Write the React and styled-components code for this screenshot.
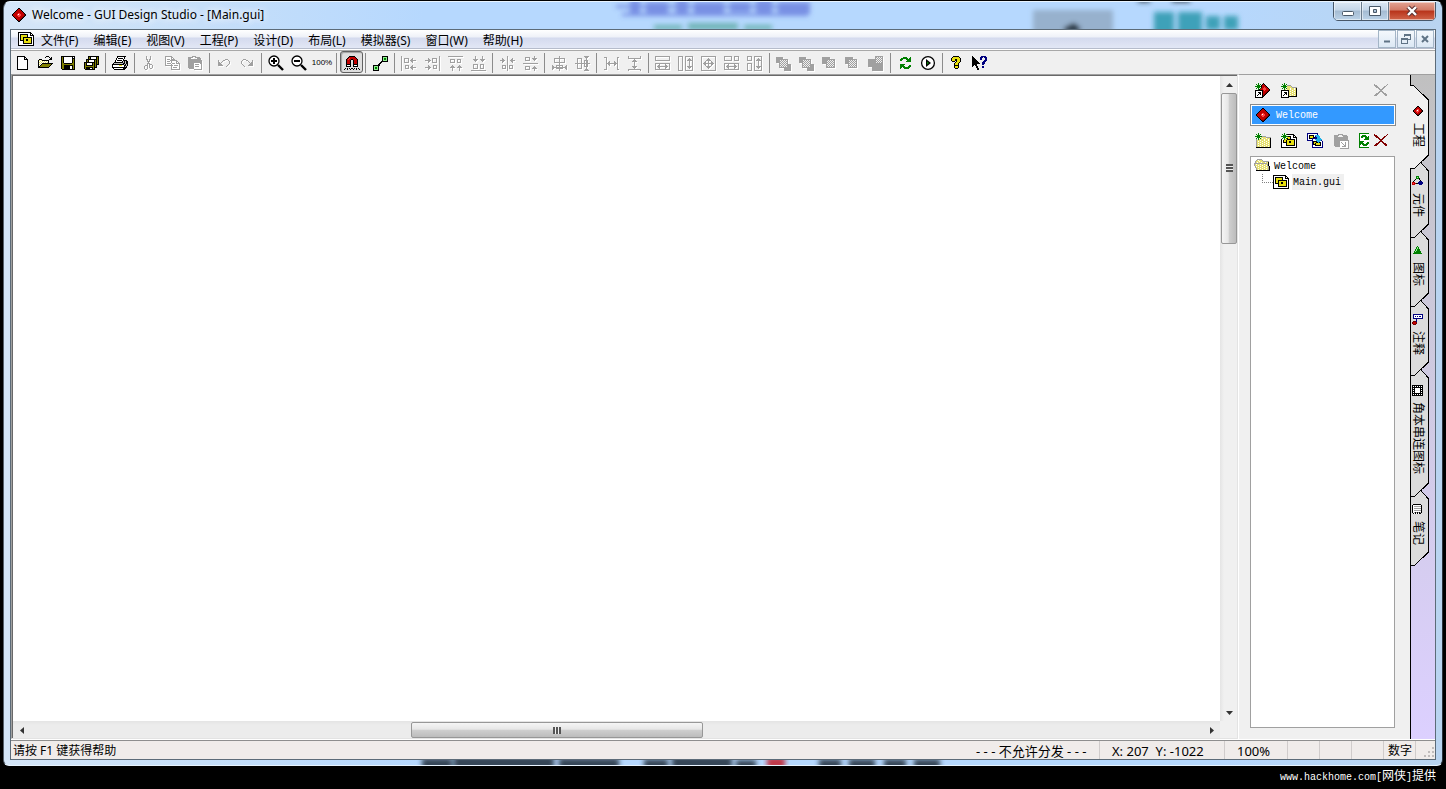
import React, { useState } from 'react'
import styled, { createGlobalStyle, css } from 'styled-components'

/*

  1. Bitmap draws the old 16 colour toolbar icons, one letter for each pixel.
  2. Line draws the thin one pixel icons (align, size, order).
  3. Menu, toolbar, side tabs and status bar are mapped from the arrays below.

 */

const palette = {
  K: '#000000',
  W: '#ffffff',
  O: '#808000',
  Y: '#e6e070',
  y: '#e8e010',
  G: '#c0c0c0',
  g: '#a0a0a0',
  R: '#c00000',
  r: '#ff4040',
  D: '#700000',
  N: '#008000',
  n: '#90ee90',
  B: '#000080',
  b: '#20b0e8'
}

const bitmaps = {
  open: [
    '',
    '.........KKK....',
    '........K...K.K.',
    '.............KK.',
    '..KKK.......KKK.',
    '.KYWYKKKKKKK....',
    '.KWYWYWYWYWK....',
    '.KYWYWYWYWYK....',
    '.KWYWKKKKKKKKKKK',
    '.KYWKOOOOOOOOOK.',
    '.KWKOOOOOOOOOK..',
    '.KKOOOOOOOOOK...',
    '.KKKKKKKKKKK....'
  ],
  save: [
    '',
    '.KKKKKKKKKKKKKK',
    '.KOKWWWWWWWWKWK',
    '.KOKWWWWWWWWKKK',
    '.KOKWWWWWWWWKOK',
    '.KOKWWWWWWWWKOK',
    '.KOKWWWWWWWWKOK',
    '.KOKWWWWWWWWKOK',
    '.KOOKKKKKKKKOOK',
    '.KOOOOOOOOOOOOK',
    '.KOOKKKKKKKKKOK',
    '.KOOKKKKKKWWKOK',
    '.KOOKKKKKKWWKOK',
    '.KOOKKKKKKWWKOK',
    '..KKKKKKKKKKKKK'
  ],
  saveAll: [
    '',
    '.....KKKKKKKKKKK',
    '.....KOKWWWWWKOK',
    '.....KOKWWWWWKOK',
    '...KKKKKKKKKKKOK',
    '...KOKWWWWWKOKOK',
    '...KOKWWWWWKOKOK',
    '.KKKKKKKKKKKOKOK',
    '.KOKWWWWWKOKOKOK',
    '.KOKWWWWWKOKOKKK',
    '.KOKKKKKKKOKOK..',
    '.KOOOOOOOOOKOK..',
    '.KOKKKKKKKOKKK..',
    '.KOKKKKWWKOK....',
    '..KKKKKKKKKK....'
  ],
  print: [
    '',
    '.....KKKKKKKKK..',
    '.....KWWWWWWK...',
    '....KWKKKKKWK...',
    '....KWWWWWWK....',
    '...KWKKKKKWKKKK.',
    '...KWWWWWWKGKGKK',
    '..KKKKKKKKKGKGKK',
    '.KGGGGGGGGGKKGKK',
    'KKKKKKKKKKKKGKGK',
    'KWWWWWWyyyWWKKGK',
    'KWWWWWWWWWWWKGK.',
    'KKKKKKKKKKKKKKK.',
    '.KWWWWWWWWWKKK..',
    '..KKKKKKKKKKK...'
  ],
  cut: [
    '',
    '.....g...g',
    '.....g...g',
    '.....g...g',
    '.....gg.gg',
    '......g.g',
    '......ggg',
    '.......g',
    '......ggg',
    '......g.ggg',
    '....ggg.g..g',
    '...g..g.g..g',
    '...g..g.g..g',
    '...g..g..gg',
    '....gg'
  ],
  copy: [
    '',
    '.ggggggg',
    '.gWWWWWgg',
    '.gWWWWWgWg',
    '.gWgggWgggg',
    '.gWWWWggggggg',
    '.gWgggWgWWWWgg',
    '.gWWWWWgWWWWgWg',
    '.gWggggWgggWgggg',
    '.gWWWWWgWWWWWWWg',
    '.ggggggggWggggWg',
    '.......gWWWWWWWg',
    '.......gWggggWWg',
    '.......gWWWWWWWg',
    '.......ggggggggg'
  ],
  paste: [
    '',
    '.....gggg',
    '.ggggg..ggggg',
    '.ggg......gggg',
    '.ggggggggggggg',
    '.gggggggggggggg',
    '.gggggggggggggg',
    '.gggggggggggggg',
    '.ggggggWWWWWWgg',
    '.ggggggWggggWWg',
    '.ggggggWWWWWWWg',
    '.ggggggWggggWWg',
    '.ggggggWWWWWWWg',
    '..gggggWWWWWWWg',
    '.......gggggggg'
  ],
  undo: [
    '',
    '',
    '',
    '',
    '.........ggg',
    '..g....gg...g',
    '..g...g......g',
    '..gg.g.......g',
    '..ggg........g',
    '..gggg......g',
    '..ggggg....g',
    '..........g'
  ],
  redo: [
    '',
    '',
    '',
    '',
    '....ggg',
    '...g...gg....g',
    '..g......g...g',
    '..g.......g.gg',
    '..g........ggg',
    '...g......gggg',
    '....g....ggggg',
    '.....g'
  ],
  magnet: [
    '',
    '.....KKKKKK',
    '....KRRRRRRK',
    '...KRrRRRRRRK',
    '..KRrRRKKRRRRK',
    '..KRRRK..KRRRK',
    '..KRRRK..KRRRK',
    '..KRRRK..KRRRK',
    '..KRRRK..KRRRK',
    '..KKKKK..KKKKK',
    '..KWWWK..KWWWK',
    '..KKKKK..KKKKK',
    '',
    '.K.K.K.KK.K.K.K',
    'K..K..K..K..K..K'
  ],
  connect: [
    '',
    '..........KKKKKK',
    '..........KnnnnK',
    '..........KnNNnK',
    '..........KnNNnK',
    '..........KnnnnK',
    '.........KKKKKKK',
    '........KK......',
    '.......KK.......',
    '......KK........',
    '.KKKKKKK........',
    '.KnnnnK.........',
    '.KnNNnK.........',
    '.KnNNnK.........',
    '.KnnnnK.........',
    '.KKKKKK.........'
  ],
  refresh: [
    '',
    '',
    '......NNNN...N',
    '....NNNNNNN.NN',
    '...NNN...NNNNN',
    '...NN.....NNNN',
    '.........NNNNN',
    '',
    '',
    '...NNNNN',
    '...NNNN.....NN',
    '...NNNNN...NNN',
    '...NN.NNNNNNN',
    '...N...NNNNN'
  ],
  help: [
    '',
    '....KKKKKK',
    '...KyyyyyyK',
    '..KyyyyyyyyK',
    '..KyyyKKyyyK',
    '..KyyyKKyyyK',
    '...KKK.KyyyK',
    '......KyyyK',
    '.....KyyyK',
    '.....KyyyK',
    '.....KKKKK',
    '.....KyyyK',
    '.....KyyyK',
    '......KKK'
  ],
  whatsThis: [
    '',
    'K........BBBBB',
    'KK......BBB.BBB',
    'KKK.....BB...BB',
    'KKKK....BB...BB',
    'KKKKK.......BBB',
    'KKKKKK.....BBB',
    'KKKKKKK...BBB',
    'KKKKKKKK..BBB',
    'KKKKK.....BB',
    'KK.KK',
    'K...KK....BB',
    '....KK....BB',
    '.....KK',
    '.....KK'
  ],
  diamond: [
    '',
    '.......KK',
    '......KRRK',
    '.....KRRRRK',
    '....KRRRRRRK',
    '...KRRRRRRRRK',
    '..KRRRRrrRRRRK',
    '.KRRRRrWrrRRRDK',
    '.KRRRRrrrrRRRDK',
    '..KRRRRrrRRRDK',
    '...KRRRRRRRDK',
    '....KRRRRRDK',
    '.....KRRRDK',
    '......KDDK',
    '.......KK'
  ],
  guiFile: [
    '',
    'KKKKKKKKKKKKK',
    'KWWWWWWWWWWWKK',
    'KWKKKKKKKKWWKWK',
    'KWKyyyyyyKWWKKKK',
    'KWKyyyyyyKWWWWWK',
    'KWKyyKKKKKKKKKWK',
    'KWKyyKyyyyyyyKWK',
    'KWKyyKyyKKyyyKWK',
    'KWKKKKyyKKyyyKWK',
    'KWWWWKyyyyyyyKWK',
    'KWWWWKyyyyyyyKWK',
    'KWWWWKKKKKKKKKWK',
    'KWWWWWWWWWWWWWWK',
    'KKKKKKKKKKKKKKKK'
  ],
  newProject: [
    '...N....K',
    '.N.N.N.KRK',
    '..NNN.KRRRK',
    'NNNNNNKRRRRK',
    '..NNN.KRRrRRK',
    '.N.N.NRRrrrRRK',
    '...NKRRRrrrRRRK',
    'KKKKKKKKRrRRRDK',
    'KWWWWWWKRRRRDK',
    'KWWKKKWKRRRDK',
    'KWWWKKWKRRDK',
    'KWWKWKWKRDK',
    'KWKWWWWKDK',
    'KWWWWWWKK',
    'KKKKKKKK'
  ],
  openProject: [
    '...N....',
    '.N.N.N...',
    '..NNN.gggg',
    'NNNNNNYYYYg',
    '..NNN.YYYYYggggg',
    '.N.N.NYYYWYYYWYK',
    '...NYWYYYWYYYWYK',
    'KKKKKKKKYYYWYYYK',
    'KWWWWWWKYWYYYWYK',
    'KWWKKKWKYYYWYYYK',
    'KWWWKKWKYWYYYWYK',
    'KWWKWKWKYYYWYYYK',
    'KWKWWWWKYWYYYWYK',
    'KWWWWWWKKKKKKKKK',
    'KKKKKKKK'
  ],
  newFolder: [
    '...N',
    '.N.N.N',
    '..NNN.',
    'NNNNNNNgggg',
    '..NNN.YYYYYggggg',
    '.N.N.NYWYYYWYYYK',
    '.g.NYYYYYWYYYWYK',
    '.gYYYWYYYWYYYWYK',
    '.gYWYYYWYYYWYYYK',
    '.gYYYWYYYWYYYWYK',
    '.gYWYYYWYYYWYYYK',
    '.gYYYWYYYWYYYWYK',
    '.gYWYYYWYYYWYYYK',
    '.gYYYWYYYWYYYWYK',
    '.KKKKKKKKKKKKKKK'
  ],
  newGui: [
    '...N',
    '.N.N.NKKKKKKK',
    '..NNN.WWWWWWKK',
    'NNNNNNNKKKWWKWK',
    '..NNN.yyyKWWKKKK',
    '.N.N.NKyyKWWWWWK',
    'KW.NyyKKKKKKKKWK',
    'KWKyyKyyyyyyyKWK',
    'KWKyyKyyKKyyyKWK',
    'KWKKKKyyKKyyyKWK',
    'KWWWWKyyyyyyyKWK',
    'KWWWWKyyyyyyyKWK',
    'KWWWWKKKKKKKKKWK',
    'KWWWWWWWWWWWWWWK',
    'KKKKKKKKKKKKKKKK'
  ],
  moveGui: [
    'BBBBBBBBBBB',
    'BWWWWWWWWWB',
    'BWKKKKKWbbbb',
    'BWKyyyKWBbbbb',
    'BWKyyyKKBBbbb',
    'BWKKKBBBBBbbbb',
    'BWWWWBWWbbbbbbb',
    'BBBBBBWWWbbbbbB',
    '.....BKKKKbbbWWB',
    '.....BKyyKKbKKWB',
    '.....BKyKyyyyKWB',
    '.....BKKKyyyyKWB',
    '.....BWWKKKKKKWB',
    '.....BWWWWWWWWWB',
    '.....BBBBBBBBBBB'
  ],
  pasteLink: [
    '',
    '.....ggggg',
    '.ggggg...ggggg',
    '.gggg.....ggggg',
    '.gggggggggggggg',
    '.gggggggggggggg',
    '.gggggggggggggg',
    '.ggggggggggggggg',
    '.ggggggWWWWWWWWg',
    '.ggggggWgWWWgWWg',
    '.ggggggWWgWWgWWg',
    '.ggggggWWWgWgWWg',
    '.ggggggWWWWggWWg',
    '..gggggWWggggWWg',
    '.......WWWWWWWWg',
    '.......ggggggggg'
  ],
  sync: [
    'NNNNNNNNNN',
    'NWWWWWWWWW',
    'NWWNNNNWWW',
    'NWNNNNNNWN',
    'NWNN.WNNNN',
    'NWWWWWNNNN',
    'NWWWWNNNNN',
    'NWWWWWWWWW',
    'NNNNNWWWWW',
    'NNNNWWWWNN',
    'NNNNNWWNNN',
    'NNWNNNNNNW',
    'NWWWNNNNWW',
    'NWWWWWWWWW',
    'NNNNNNNNNN'
  ],
  close: [
    'g............g',
    'ggg.........g',
    '.ggg......gg',
    '..ggg....gg',
    '....gg..gg',
    '.....gggg',
    '......gg',
    '.....gggg',
    '....gg..gg',
    '..ggg....ggg',
    '.ggg......ggg',
    'ggg........gg'
  ],
  folder: [
    '',
    '...ggggg',
    '..gYWYYYg',
    '.gYYYWYYYgggggg',
    '.gYWYYYWYYYWYYK',
    'gggggggggggggYK',
    'gYWYYYWYYYWYYgK',
    'gYYYWYYYWYYYWgK',
    '.gWYYYWYYYWYYYgK',
    '.gYYWYYYWYYYWYgK',
    '..gYYYWYYYWYYYgK',
    '..gYWYYYWYYYWYgK',
    '..KKKKKKKKKKKKKK'
  ],
  smallDiamond: [
    '.....KK',
    '....KRRK',
    '...KRRRRK',
    '..KRRrrRRK',
    '.KRRrWrRRDK',
    '.KRRrrrRRDK',
    '..KRRrRRDK',
    '...KRRRDK',
    '....KDDK',
    '.....KK'
  ],
  parts: [
    '....NNN',
    '....NnN',
    '....NNNK',
    '...K...K',
    '..K.....K',
    '.K.....BBB',
    'RRR...BBBBB',
    'RrRRKKBBBBB',
    'RRR....BBB'
  ],
  triangle: [
    '',
    '.....N',
    '....NnN',
    '....NnN',
    '...NnNNN',
    '...NnNNN',
    '..NnNNNNN',
    '..NNNNNNN',
    '.NNNNNNNNN'
  ],
  note: [
    '.BBBBBBBBBB',
    '.BWWWWWWWWB',
    '.BWBWBWBBWB',
    '.BWWWWWWWWB',
    '.BBBBBBBBBB',
    '....B',
    '....B',
    '.DDDB',
    'DRRRD',
    'DRRRD',
    '.DDD'
  ],
  film: [
    'KKKKKKKKKKK',
    'KWKWKWKWKWK',
    'KKKKKKKKKKK',
    'KWKWWWWWKWK',
    'KKKWWWWWKKK',
    'KWKWWWWWKWK',
    'KKKWWWWWKKK',
    'KWKWWWWWKWK',
    'KKKKKKKKKKK',
    'KWKWKWKWKWK',
    'KKKKKKKKKKK'
  ],
  notes: [
    '.KKKKKKKK',
    'KWWWWWWWWK',
    'KWgggggggK',
    'KWWWWWWWWK',
    'KWgggggggK',
    'KWWWWWWWWK',
    'KWgggggggK',
    'KWWWWWWWWK',
    'KWgKgKgKgK',
    '.KWKWKWKK'
  ]
}

const lines = {
  blank: 'M3.5 1.5h7l3 3v10h-10zM10.5 1.5v3h3',
  alignLeft: 'M.5 1v15M3.5 3.5h4v4h-4zM9 5.5h6M11.5 3.5l-2 2l2 2zM4.5 10.5h3v3h-3zM9 12.5h6M11.5 10.5l-2 2l2 2z',
  alignRight: 'M15.5 1v15M8.5 3.5h4v4h-4zM1 5.5h6M4.5 3.5l2 2l-2 2zM9.5 10.5h3v3h-3zM1 12.5h6M4.5 10.5l2 2l-2 2z',
  alignTop: 'M1 1.5h15M3.5 4.5h4v3h-4zM10.5 4.5h3v3h-3zM5.5 10v6M3.5 12.5l2-2l2 2zM12.5 10v6M10.5 12.5l2-2l2 2z',
  alignBottom: 'M1 15.5h15M3.5 9.5h4v4h-4zM10.5 9.5h3v4h-3zM5.5 1v6M3.5 4.5l2 2l2-2zM12.5 1v6M10.5 4.5l2 2l2-2z',
  centerX: 'M8.5 1v15M1 5.5h5M3.5 3.5l2 2l-2 2zM16 5.5h-5M13.5 3.5l-2 2l2 2zM3.5 10.5h3v3h-3zM10.5 10.5h3v3h-3z',
  centerY: 'M1 8.5h15M3.5 2.5h4v3h-4zM12.5 1v5M10.5 3.5l2 2l2-2zM3.5 11.5h4v3h-4zM12.5 11v5M10.5 13.5l2-2l2 2z',
  middleX: 'M8.5 1v15M3.5 3.5h10v4h-10zM5.5 10.5h6v3h-6zM1.5 10.5v4l2-2zM15.5 10.5v4l-2-2zM1 12.5h14',
  middleY: 'M1 8.5h15M3.5 3.5h4v10h-4zM10.5 5.5h3v6h-3zM10.5 1.5h4l-2 2zM10.5 15.5h4l-2-2zM12.5 1v14',
  spaceX: 'M1 2.5h2v12h-2M16 2.5h-2v12h2M4 8.5h9M6.5 6.5l-2 2l2 2zM11.5 6.5l2 2l-2 2z',
  spaceY: 'M2.5 1v2h12v-2M2.5 16v-2h12v2M8.5 4v9M6.5 6.5l2-2l2 2zM6.5 11.5l2 2l2-2z',
  sameWidth: 'M.5 1.5h14v4h-14zM.5 8.5h14v6h-14zM2 11.5h11M4.5 9.5l-2 2l2 2zM10.5 9.5l2 2l-2 2z',
  sameHeight: 'M.5 1.5h4v14h-4zM7.5 1.5h7v14h-7zM11.5 3v11M9.5 5.5l2-2l2 2zM9.5 11.5l2 2l2-2z',
  sameSize: 'M.5 1.5h14v14h-14zM2 8.5h11M7.5 3v11M4.5 6.5l-2 2l2 2zM10.5 6.5l2 2l-2 2zM5.5 5.5l2-2l2 2zM5.5 11.5l2 2l2-2z',
  fitWidth: 'M.5 1.5h7v4h-7zM10.5 1.5h4v4h-4zM.5 8.5h14v6h-14zM2 11.5h11M4.5 9.5l-2 2l2 2zM10.5 9.5l2 2l-2 2z',
  fitHeight: 'M.5 1.5h4v4h-4zM.5 8.5h4v7h-4zM7.5 1.5h7v14h-7zM11.5 3v11M9.5 5.5l2-2l2 2zM9.5 11.5l2 2l2-2z'
}

// solid squares first, dotted square on top
const orders = {
  toFront: ['M0 2h7v6H0zM8 9h7v7H8z', 'M3.5 4.500h8v8h-8z'],
  toBack: ['M0 2h7v6H0zM8 9h7v7H8z', 'M3.5 4.500h8v8h-8z'],
  forward: ['M0 2h8v7H0z', 'M4.5 4.500h8v8h-8z'],
  backward: ['M0 2h8v7H0z', 'M3.5 4.500h8v8h-8z'],
  group: ['M0 4h8v8H0zM4 7h11v9H4z', 'M7.5 1.500h7v7h-7z']
}

const runs = (row) => {
  const out = []
  let x = 0
  while (x < row.length) {
    let end = x + 1
    while (end < row.length && row[end] === row[x]) end += 1
    if (row[x] !== '.') out.push([x, end - x, palette[row[x]]])
    x = end
  }
  return out
}

const Bitmap = ({ name, size = 16, tint }) => (
  <svg width={size} height={size} viewBox={`0 0 ${size} ${size}`} shapeRendering="crispEdges" aria-hidden="true">
    {bitmaps[name].map((row, y) =>
      runs(row).map(([x, width, fill]) => (
        <rect key={`${x}-${y}`} x={x} y={y} width={width} height="1" fill={tint || fill} />
      ))
    )}
  </svg>
)

const Line = ({ name }) => (
  <svg width="16" height="16" viewBox="0 0 16 16" shapeRendering="crispEdges" aria-hidden="true">
    <path
      d={lines[name]}
      fill={name === 'blank' ? '#fff' : 'none'}
      stroke={name === 'blank' ? '#000' : '#a0a0a0'} />
  </svg>
)

const Order = ({ name }) => (
  <svg width="16" height="16" viewBox="0 0 16 16" shapeRendering="crispEdges" aria-hidden="true">
    <defs>
      <pattern id={`dots-${name}`} width="2" height="2" patternUnits="userSpaceOnUse">
        <rect width="2" height="2" fill="#f0f0f0" />
        <rect width="1" height="1" fill="#a0a0a0" />
        <rect x="1" y="1" width="1" height="1" fill="#a0a0a0" />
      </pattern>
    </defs>
    <path d={orders[name][0]} fill="#a0a0a0" />
    <path d={orders[name][1]} fill={`url(#dots-${name})`} stroke="#a0a0a0" />
  </svg>
)

const Zoom = ({ plus }) => (
  <svg width="16" height="16" viewBox="0 0 16 16" aria-hidden="true">
    <circle cx="6" cy="6" r="5" fill="#fff" stroke="#000" strokeWidth="1.3" />
    <path d={plus ? 'M3 6h6M6 3v6' : 'M3 6h6'} stroke="#000" strokeWidth="2" />
    <path d="M10 10l5 5" stroke="#000" strokeWidth="2.4" />
  </svg>
)

const Play = () => (
  <svg width="16" height="16" viewBox="0 0 16 16" aria-hidden="true">
    <circle cx="8" cy="8" r="6.4" fill="#fff" stroke="#000" strokeWidth="1.3" />
    <path d="M6 4v8l5-4z" fill="#000" />
    <path d="M7 6.5v3l2-1.5z" fill="#008000" />
  </svg>
)

const menus = ['文件(F)', '编辑(E)', '视图(V)', '工程(P)', '设计(D)', '布局(L)', '模拟器(S)', '窗口(W)', '帮助(H)']

const toolGroups = [
  [['New', <Line name="blank" />], ['Open', <Bitmap name="open" />], ['Save', <Bitmap name="save" />], ['Save all', <Bitmap name="saveAll" />]],
  [['Print', <Bitmap name="print" />]],
  [['Cut', <Bitmap name="cut" />, true], ['Copy', <Bitmap name="copy" />, true], ['Paste', <Bitmap name="paste" />, true]],
  [['Undo', <Bitmap name="undo" />, true], ['Redo', <Bitmap name="redo" />, true]],
  [['Zoom in', <Zoom plus />], ['Zoom out', <Zoom />], ['Actual size', '100%']],
  [['Snap', <Bitmap name="magnet" />]],
  [['Connect', <Bitmap name="connect" />]],
  ['alignLeft', 'alignRight', 'alignTop', 'alignBottom'].map((n) => [n, <Line name={n} />, true]),
  ['centerX', 'centerY'].map((n) => [n, <Line name={n} />, true]),
  ['middleX', 'middleY'].map((n) => [n, <Line name={n} />, true]),
  ['spaceX', 'spaceY'].map((n) => [n, <Line name={n} />, true]),
  ['sameWidth', 'sameHeight', 'sameSize', 'fitWidth', 'fitHeight'].map((n) => [n, <Line name={n} />, true]),
  Object.keys(orders).map((n) => [n, <Order name={n} />, true]),
  [['Refresh', <Bitmap name="refresh" />], ['Run', <Play />]],
  [['Help', <Bitmap name="help" />], ['What is this', <Bitmap name="whatsThis" />]]
]

const tabs = [
  { label: '工程', icon: 'smallDiamond', span: 94 },
  { label: '元件', icon: 'parts', span: 76 },
  { label: '图标', icon: 'triangle', span: 76 },
  { label: '注释', icon: 'note', span: 76 },
  { label: '角本串连图标', icon: 'film', span: 128 },
  { label: '笔记', icon: 'notes', span: 76 }
]

export default function App() {
  const [snap, setSnap] = useState(true)

  return (
    <>
      <GlobalStyle />
      <Desktop>
        <Window>
          <Backdrop />
          <TitleBar>
            <Bitmap name="diamond" />
            <Title>Welcome - GUI Design Studio - [Main.gui]</Title>
            <Caption>
              <CaptionButton aria-label="Minimize">
                <svg width="14" height="12" viewBox="0 0 14 12"><rect x="1.5" y="6.5" width="11" height="4" rx="1" fill="#fff" stroke="#4a5968" /></svg>
              </CaptionButton>
              <CaptionButton aria-label="Maximize">
                <svg width="14" height="12" viewBox="0 0 14 12">
                  <path d="M1.5 1.5h11v9h-11zM5.5 4.5h3v3h-3z" fill="#fff" fillRule="evenodd" stroke="#4a5968" />
                </svg>
              </CaptionButton>
              <CaptionButton $close aria-label="Close">
                <svg width="14" height="12" viewBox="0 0 14 12">
                  <path d="M3 2l8 8M11 2l-8 8" stroke="#5a3030" strokeWidth="4.4" />
                  <path d="M3 2l8 8M11 2l-8 8" stroke="#fff" strokeWidth="2.4" />
                </svg>
              </CaptionButton>
            </Caption>
          </TitleBar>
          <Client>
            <MenuBar>
              <Bitmap name="guiFile" />
              <MenuList>
                {menus.map((menu) => (
                  <MenuItem key={menu}>{menu}</MenuItem>
                ))}
              </MenuList>
              <ChildButton aria-label="Minimize document">
                <svg width="12" height="12" viewBox="0 0 12 12"><path d="M3 8.5h6" stroke="#5f7385" strokeWidth="2" /></svg>
              </ChildButton>
              <ChildButton aria-label="Restore document">
                <svg width="12" height="12" viewBox="0 0 12 12" shapeRendering="crispEdges">
                  <path d="M4.5 4V1.5h6v5H8M4 2.5h7M1.5 5.5h6v5h-6zM1 6.5h7" fill="none" stroke="#5f7385" />
                </svg>
              </ChildButton>
              <ChildButton aria-label="Close document">
                <svg width="12" height="12" viewBox="0 0 12 12"><path d="M3 3l6 6M9 3l-6 6" stroke="#5f7385" strokeWidth="2" /></svg>
              </ChildButton>
            </MenuBar>
            <Toolbar>
              {toolGroups.map((group, i) => (
                <ToolGroup key={i}>
                  {group.map(([name, icon, disabled]) => (
                    <ToolButton
                      key={name}
                      aria-label={name}
                      disabled={disabled}
                      $pressed={name === 'Snap' && snap}
                      onClick={name === 'Snap' ? () => setSnap(!snap) : undefined}>
                      {icon}
                    </ToolButton>
                  ))}
                </ToolGroup>
              ))}
            </Toolbar>
            <Workspace>
              <Editor>
                <Canvas />
                <ScrollBar $vertical>
                  <Arrow $vertical aria-label="Scroll up"><svg width="7" height="4"><path d="M0 4l3.500-4l3.500 4z" fill="#333" /></svg></Arrow>
                  <Thumb $vertical $grow={149}><Grip $vertical /></Thumb>
                  <Gap $grow={461} />
                  <Arrow $vertical aria-label="Scroll down"><svg width="7" height="4"><path d="M0 0l3.500 4l3.500-4z" fill="#333" /></svg></Arrow>
                </ScrollBar>
                <ScrollBar>
                  <Arrow aria-label="Scroll left"><svg width="4" height="7"><path d="M4 0l-4 3.500l4 3.500z" fill="#333" /></svg></Arrow>
                  <Gap $grow={381} />
                  <Thumb $grow={291}><Grip /></Thumb>
                  <Gap $grow={500} />
                  <Arrow aria-label="Scroll right"><svg width="4" height="7"><path d="M0 0l4 3.500l-4 3.500z" fill="#333" /></svg></Arrow>
                </ScrollBar>
                <Corner />
              </Editor>
              <Panel>
                <PanelTools>
                  <PanelButton aria-label="New project"><Bitmap name="newProject" /></PanelButton>
                  <PanelButton aria-label="Open project"><Bitmap name="openProject" /></PanelButton>
                  <PanelButton $last disabled aria-label="Close project"><Bitmap name="close" size={14} /></PanelButton>
                </PanelTools>
                <Project>
                  <Bitmap name="diamond" />
                  Welcome
                </Project>
                <PanelTools>
                  <PanelButton aria-label="New folder"><Bitmap name="newFolder" /></PanelButton>
                  <PanelButton aria-label="New design"><Bitmap name="newGui" /></PanelButton>
                  <PanelButton aria-label="Move design"><Bitmap name="moveGui" /></PanelButton>
                  <PanelButton disabled aria-label="Paste link"><Bitmap name="pasteLink" /></PanelButton>
                  <PanelButton $narrow aria-label="Sync"><Bitmap name="sync" /></PanelButton>
                  <PanelButton $last aria-label="Delete"><Bitmap name="close" size={14} tint="#800000" /></PanelButton>
                </PanelTools>
                <Tree>
                  <TreeItem>
                    <Bitmap name="folder" />
                    <TreeLabel>Welcome</TreeLabel>
                  </TreeItem>
                  <TreeItem $child>
                    <Branch />
                    <Bitmap name="guiFile" />
                    <TreeLabel $selected>Main.gui</TreeLabel>
                  </TreeItem>
                </Tree>
              </Panel>
              <TabStrip>
                {tabs.map(({ label, icon, span }, i) => (
                  <Tab key={label} $span={span} $first={i === 0} $order={tabs.length - i}>
                    <TabShape span={span} active={i === 0} />
                    <Bitmap name={icon} size={12} />
                    <span>{label}</span>
                  </Tab>
                ))}
              </TabStrip>
            </Workspace>
            <StatusBar>
              <Hint>请按 F1 键获得帮助</Hint>
              <Cell $width={124} $large>- - - 不允许分发 - - -</Cell>
              <Cell $width={125} $pad={12} $large>X: 207&nbsp; Y: -1022</Cell>
              <Cell $width={63} $pad={12} $large>100%</Cell>
              <Cell $width={32} />
              <Cell $width={32} />
              <Cell $width={32} />
              <Cell $width={32} $pad={4}>数字</Cell>
              <Cell $width={19} $pad={8}>
                <svg width="10" height="12" viewBox="0 0 10 12" shapeRendering="crispEdges">
                  <path d="M8 2h2v2H8zM4 6h2v2H4zM8 6h2v2H8zM0 10h2v2H0zM4 10h2v2H4zM8 10h2v2H8z" fill="#c0bcbb" />
                </svg>
              </Cell>
            </StatusBar>
          </Client>
        </Window>
        <Credit>
          www.hackhome.com[<Wide>网侠</Wide>]<Wide>提供</Wide>
        </Credit>
      </Desktop>
    </>
  )
}

const TabShape = ({ span, active }) => (
  <Shape width="19" height={span + 1} shapeRendering="crispEdges" aria-hidden="true">
    <path
      d={active
        ? `M0 .5V10.500H3.500L18.500 25V${span - 14}L4.500 ${span - 0.5}H0`
        : `M0 7L0 0H10.500L18.500 9V${span - 14}L4.500 ${span - 0.5}H0z`}
      fill={active ? '#f0f0f0' : '#dcdcdc'} />
    <path
      d={active
        ? `M.5 0V10.500H3.500L18.500 25V${span - 14}L4.500 ${span - 0.5}H0`
        : `M10.500 0L18.500 9V${span - 14}L4.500 ${span - 0.5}H0M.5 0V${span}`}
      fill="none"
      stroke="#000" />
  </Shape>
)

// Soft shapes of the page behind the glass frame
const Backdrop = () => (
  <Glass aria-hidden="true">
    <defs>
      <filter id="haze" x="-20%" y="-100%" width="140%" height="300%"><feGaussianBlur stdDeviation="2.5" /></filter>
    </defs>
    <g filter="url(#haze)">
      <path d="M612 3h194v3h-194zM618 11h186v3h-186zM626-2h10v14h-10zM642 0h22v12h-22zM672-2h12v14h-12zM690 0h30v12h-30zM726 0h20v10h-20zM752-2h16v14h-16zM774 0h32v12h-32z" fill="#5060d4" opacity=".6" />
      <path d="M650 23h28v5h-28zM684 21h50v7h-50zM740 23h28v5h-28z" fill="#3f9c86" opacity=".6" />
      <rect x="1029" y="8" width="80" height="24" fill="#8296ac" opacity=".6" />
      <path d="M1060 26l10-5l6 5v4h-16z" fill="#22303c" />
      <path d="M1150 10h20v22h-20zM1174 10h24v22h-24zM1202 14h14v14h-14zM1220 14h14v14h-14z" fill="#1f93a8" opacity=".8" />
      <path d="M1134-4h12v4h-12zM1168-4h18v4h-18z" fill="#22303c" />
    </g>
    <svg y="100%" overflow="visible">
      <path filter="url(#haze)" d="M418-7h30v12h-30zM450-9h100v14h-100zM555-7h60v12h-60zM640-6h24v11h-24zM668-9h60v14h-60zM732-5h20v10h-20zM815-6h22v11h-22zM845-6h26v11h-26zM880-6h22v11h-22zM910-6h26v11h-26z" fill="#16222e" opacity=".8" />
      <rect filter="url(#haze)" x="763" y="-8" width="18" height="12" fill="#c03848" />
    </svg>
  </Glass>
)

const uiFont = "'Noto Sans', 'Noto Sans CJK SC', sans-serif"
const monoFont = "'Liberation Mono', 'Noto Sans CJK SC', monospace"

const GlobalStyle = createGlobalStyle`
  * {
    box-sizing: border-box;
  }

  body {
    margin: 0;
    background: #000;
    color: #000;
    font-family: ${uiFont};
    font-size: 12px;
  }

  button {
    margin: 0;
    padding: 0;
    border: 0;
    background: none;
    color: inherit;
    font: inherit;
  }

  svg {
    display: block;
    flex: none;
  }
`

const Desktop = styled.div`
  display: flex;
  flex-direction: column;
  min-height: 100vh;
  padding: 1px 3px 0;
  background: #000;
`

const Window = styled.div`
  position: relative;
  flex: 1;
  display: flex;
  flex-direction: column;
  padding: 0 6px 5px;
  border: 1px solid #e8f4ff;
  border-left-color: #56616c;
  border-right-color: #2a333c;
  border-radius: 7px 7px 6px 6px;
  overflow: hidden;
  background: linear-gradient(to right, #d5e6f8 0, #c6dff9 200px, #b6d8fe 420px, #b6d8fe 84%, #b9d4f0 100%);
`

const Glass = styled.svg`
  position: absolute;
  inset: 0;
  width: 100%;
  height: 100%;
`

const TitleBar = styled.header`
  position: relative;
  display: flex;
  align-items: flex-start;
  height: 27px;
  padding: 5px 0 0 1px;
`

const Title = styled.h1`
  flex: 1;
  margin: 0 0 0 5px;
  font-size: 12px;
  font-weight: 400;
  line-height: 16px;
  text-shadow: 0 0 8px #fff, 0 0 8px #fff;
`

const Caption = styled.div`
  display: flex;
  margin-top: -6px;
  border: 1px solid #48586a;
  border-radius: 0 0 5px 5px;
  overflow: hidden;
`

const CaptionButton = styled.button`
  display: flex;
  align-items: center;
  justify-content: center;
  width: 27px;
  height: 18px;
  background: linear-gradient(#dce8f4, #c4d6e8 45%, #a4bbd2 50%, #bcd3e8);
  box-shadow: inset 0 0 0 1px rgba(255, 255, 255, 0.5);

  & + & {
    border-left: 1px solid #6a7b8c;
  }

  ${(props) => props.$close && css`
    width: 47px;
    background: linear-gradient(#e3a494, #d27a66 45%, #b8331a 50%, #d0654a);
  `}
`

const Client = styled.div`
  position: relative;
  flex: 1;
  display: flex;
  flex-direction: column;
  border: 1px solid #5c6b78;
  background: #f0f0f0;
`

const MenuBar = styled.nav`
  display: flex;
  align-items: center;
  height: 21px;
  padding: 0 1px 2px 7px;
  border-bottom: 1px solid #a8a8a8;
  background: linear-gradient(#fff, #eef1f8 7px, #d4daee 8px, #e2e7f5 18px, #b6bccb 18px, #b6bccb 19px, #fff 19px);
`

const MenuList = styled.div`
  flex: 1;
  display: flex;
  gap: 15px;
  margin-left: 7px;
`

const MenuItem = styled.button`
  padding-top: 2px;
  line-height: 17px;
  white-space: nowrap;
`

const ChildButton = styled.button`
  display: flex;
  align-items: center;
  justify-content: center;
  width: 18px;
  height: 18px;
  margin-left: 1px;
  border: 1px solid #a3b5c6;
  background: linear-gradient(#f4f8fc, #dce8f4);
`

const Toolbar = styled.div`
  display: flex;
  height: 23px;
  background: #f0f0f0;
`

const ToolGroup = styled.div`
  display: flex;

  & + & {
    padding-left: 3px;
    margin-left: 2px;
    border-left: 1px solid #8c8c8c;
    border-image: linear-gradient(transparent 3px, #8c8c8c 3px, #8c8c8c 21px, transparent 21px) 1;
  }
`

const ToolButton = styled.button`
  display: flex;
  align-items: center;
  justify-content: center;
  width: 23px;
  height: 22px;
  padding: 1px 1px 0 0;
  font-family: 'Liberation Sans Narrow', 'Liberation Sans', sans-serif;
  font-size: 8px;

  &:disabled svg {
    filter: drop-shadow(1px 1px 0 #fff);
  }

  ${(props) => props.$pressed && css`
    padding: 1px 0 0;
    border: 1px solid #606060;
    border-radius: 3px;
    background: #dedede;
    box-shadow: inset 1px 1px 1px #a0a0a0;
  `}
`

const Workspace = styled.main`
  flex: 1;
  display: flex;
  border-bottom: 1px solid #fff;
`

const Editor = styled.section`
  flex: 1;
  display: grid;
  grid-template-columns: 1fr 17px;
  grid-template-rows: 1fr 17px;
  padding: 1px 0 0 1px;
  border: 1px solid #a0a0a0;
  border-right-color: #e3e3e3;
  border-bottom-color: #e3e3e3;
  background: #696969;
`

const Canvas = styled.div`
  background: #fff;
`

const Corner = styled.div`
  background: #f0f0f0;
`

const ScrollBar = styled.div`
  display: flex;
  flex-direction: ${(props) => (props.$vertical ? 'column' : 'row')};
  padding: ${(props) => (props.$vertical ? '0 0 0 1px' : '1px 0 0')};
  background: ${(props) => (props.$vertical ? 'linear-gradient(to right, #e4e4e4, #f0f0f0 4px)' : 'linear-gradient(#e4e4e4, #ececec 4px)')};
`

const Arrow = styled.button`
  display: flex;
  align-items: center;
  justify-content: center;
  width: ${(props) => (props.$vertical ? '16px' : '17px')};
  height: ${(props) => (props.$vertical ? '17px' : '16px')};
`

const Gap = styled.div`
  flex: ${(props) => props.$grow};
`

const Thumb = styled.div`
  flex: ${(props) => props.$grow};
  display: flex;
  align-items: center;
  justify-content: center;
  border: 1px solid #979797;
  border-radius: 2px;
  background: linear-gradient(${(props) => (props.$vertical ? 'to right' : 'to bottom')}, #f5f5f5, #e6e6e6 45%, #cfcfcf 50%, #bcbcbc);
`

const Grip = styled.div`
  width: ${(props) => (props.$vertical ? '7px' : '8px')};
  height: ${(props) => (props.$vertical ? '8px' : '7px')};
  background: repeating-linear-gradient(${(props) => (props.$vertical ? 'to bottom' : 'to right')}, #555 0, #555 2px, #f0f0f0 2px, #f0f0f0 3px);
`

const Panel = styled.aside`
  display: flex;
  flex-direction: column;
  width: 172px;
  padding: 1px 14px 11px 11px;
  border-top: 1px solid #a0a0a0;
  border-left: 1px solid #fff;
`

const PanelTools = styled.div`
  display: flex;
  align-items: center;
  height: 28px;
  padding: 2px 0 0 5px;
`

const PanelButton = styled.button`
  width: 16px;
  height: 16px;
  margin-right: 10px;

  ${(props) => props.$narrow && css`
    width: 10px;
    margin-right: 0;
    overflow: hidden;
  `}

  ${(props) => props.$last && css`
    width: 14px;
    height: 14px;
    margin: 0 8px 0 auto;
  `}
`

const Project = styled.button`
  display: flex;
  align-items: center;
  gap: 5px;
  height: 22px;
  padding-left: 3px;
  border: 2px solid #fff;
  outline: 1px solid #8a8a8a;
  outline-offset: -1px;
  background: #3399ff;
  color: #fff;
  font-family: ${monoFont};
  font-size: 10px;
`

const Tree = styled.ul`
  flex: 1;
  margin: 2px 1px 0 0;
  padding: 1px 0 0 3px;
  border: 1px solid #e3e3e3;
  border-top-color: #696969;
  border-left-color: #696969;
  outline: 1px solid #a0a0a0;
  outline-offset: -1px;
  background: #fff;
  list-style: none;
  font-family: ${monoFont};
  font-size: 10px;
`

const TreeItem = styled.li`
  display: flex;
  height: 16px;
  padding-left: ${(props) => (props.$child ? '8px' : '0')};
`

const Branch = styled.span`
  width: 11px;
  height: 9px;
  border: dotted #808080;
  border-width: 0 0 1px 1px;
`

const TreeLabel = styled.button`
  padding: 0 3px 0 1px;
  margin-left: 3px;
  line-height: 17px;
  background: ${(props) => (props.$selected ? '#f0f0f0' : 'none')};
`

const TabStrip = styled.div`
  display: flex;
  flex-direction: column;
  width: 25px;
  border-top: 1px solid #a0a0a0;
  background: linear-gradient(#c0c0c0, #cbc8d8 30%, #dcd0ff);
  overflow: hidden;

  &::after {
    content: '';
    flex: 1;
    border-left: 1px solid #000;
  }
`

const Tab = styled.button`
  position: relative;
  z-index: ${(props) => props.$order};
  display: flex;
  flex-direction: column;
  align-items: center;
  justify-content: center;
  gap: 5px;
  width: 15px;
  height: ${(props) => props.$span}px;
  margin-top: ${(props) => (props.$first ? '0' : '-7px')};
  padding: ${(props) => (props.$first ? '10px 0 0' : '0 0 6px')};

  span {
    position: relative;
    line-height: 16px;
    writing-mode: vertical-rl;
    text-orientation: sideways;
    white-space: nowrap;
  }

  svg {
    position: relative;
  }
`

const Shape = styled.svg`
  && {
    position: absolute;
  }
  top: 0;
  left: 0;
`

const StatusBar = styled.footer`
  display: flex;
  height: 19px;
  border-top: 1px solid #8e8e8e;
  background: #f0ecea;
  line-height: 18px;
`

const Hint = styled.div`
  flex: 1;
  padding: 1px 0 0 2px;
`

const Cell = styled.div`
  display: flex;
  align-items: center;
  width: ${(props) => props.$width}px;
  padding: 1px 0 0 ${(props) => props.$pad || 0}px;
  border-right: 1px solid #d0cccb;
  font-size: ${(props) => (props.$large ? '13px' : '12px')};
  white-space: nowrap;

  &:last-child {
    border-right: 0;
  }
`

const Credit = styled.p`
  margin: 0;
  padding-right: 7px;
  color: #fff;
  font-family: ${monoFont};
  font-size: 10px;
  line-height: 23px;
  text-align: right;
  height: 23px;
`

const Wide = styled.span`
  font-size: 12px;
`
